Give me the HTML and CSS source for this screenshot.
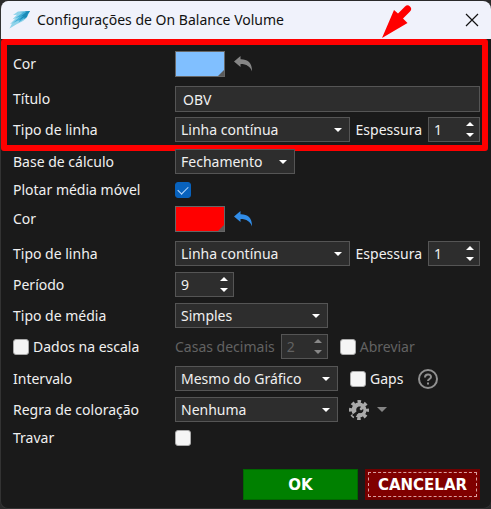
FILE: index.html
```html
<!DOCTYPE html>
<html lang="pt-BR">
<head>
<meta charset="utf-8">
<meta name="viewport" content="width=device-width, initial-scale=1">
<title>Configurações de On Balance Volume</title>
<link rel="stylesheet" href="styles.css">
</head>
<body>
<main class="window">
  <header class="titlebar">
    <svg class="logo" width="22" height="20" viewBox="0 0 22 20" aria-hidden="true">
      <path d="M21 1L9 1.500 4 5l4-.3-4.500 4.500 3-.7L1 14l2-.5L.5 18.500 8 14l6-3 3-2.500 2-3.500z" fill="#8fd3ea"/>
      <path d="M21 1L10 2l4 .5L6.500 8l4-1L4 13l7-3.500-1.500 3 6-4 2.500-4z" fill="#45b0d8"/>
      <path d="M21 1l-5 .5 1 .8-6 4.700 3.500-1.500L9 11l6.500-4-.5 2 3-2 1-3z" fill="#1a8bb8"/>
    </svg>
    <h1 class="title">Configurações de On Balance Volume</h1>
    <button class="close" type="button" aria-label="Fechar">
      <svg width="14" height="14" viewBox="0 0 14 14"><path d="M1 1l12 12M13 1L1 13" stroke="#111" stroke-width="1.200"/></svg>
    </button>
  </header>

  <form class="form">
    <section class="group marked">
      <div class="row color-row">
        <label for="color1">Cor</label>
        <div class="fields">
          <span class="swatch"><input id="color1" type="color" value="#80bfff"></span>
          <button class="undo" type="button" aria-label="Restaurar cor">
            <svg width="20" height="18" viewBox="0 0 20 18"><path d="M0 6.500L6.500 1v3.200C13 4 18.500 7.500 18 16.500 16.500 11.500 12.500 9 6.500 9v3z" fill="currentColor"/></svg>
          </button>
        </div>
      </div>
      <div class="row">
        <label for="titulo">Título</label>
        <div class="fields"><input id="titulo" class="text" type="text" value="OBV"></div>
      </div>
      <div class="row">
        <label for="linha1">Tipo de linha</label>
        <div class="fields">
          <span class="combo grow"><select id="linha1"><option>Linha contínua</option></select></span>
          <label for="esp1">Espessura</label>
          <span class="spin"><input id="esp1" type="number" value="1"></span>
        </div>
      </div>
      <svg class="arrow" width="36" height="36" viewBox="0 0 36 36" aria-hidden="true">
        <path d="M2 34L14 6l4 3.500 7-7q2.500-2.500 5 0t0 5l-7 7 4.500 4.500z" fill="#f00"/>
      </svg>
    </section>

    <section class="group">
      <div class="row">
        <label for="base">Base de cálculo</label>
        <div class="fields"><span class="combo small"><select id="base"><option>Fechamento</option></select></span></div>
      </div>
      <div class="row check-row">
        <label for="plotar">Plotar média móvel</label>
        <div class="fields"><input id="plotar" type="checkbox" checked></div>
      </div>
      <div class="row color-row">
        <label for="color2">Cor</label>
        <div class="fields">
          <span class="swatch"><input id="color2" type="color" value="#ff0000"></span>
          <button class="undo active" type="button" aria-label="Restaurar cor da média">
            <svg width="20" height="18" viewBox="0 0 20 18"><path d="M0 6.500L6.500 1v3.200C13 4 18.500 7.500 18 16.500 16.500 11.500 12.500 9 6.500 9v3z" fill="currentColor"/></svg>
          </button>
        </div>
      </div>
      <div class="row">
        <label for="linha2">Tipo de linha</label>
        <div class="fields">
          <span class="combo grow"><select id="linha2"><option>Linha contínua</option></select></span>
          <label for="esp2">Espessura</label>
          <span class="spin"><input id="esp2" type="number" value="1"></span>
        </div>
      </div>
      <div class="row">
        <label for="periodo">Período</label>
        <div class="fields"><span class="spin wide"><input id="periodo" type="number" value="9"></span></div>
      </div>
      <div class="row">
        <label for="media">Tipo de média</label>
        <div class="fields"><span class="combo medium"><select id="media"><option>Simples</option></select></span></div>
      </div>
      <div class="row">
        <label class="check"><input type="checkbox">Dados na escala</label>
        <div class="fields disabled">
          <label for="casas">Casas decimais</label>
          <span class="spin narrow"><input id="casas" type="number" value="2" disabled></span>
          <label class="check aside"><input type="checkbox" disabled>Abreviar</label>
        </div>
      </div>
    </section>

    <section class="group">
      <div class="row">
        <label for="intervalo">Intervalo</label>
        <div class="fields">
          <span class="combo large"><select id="intervalo"><option>Mesmo do Gráfico</option></select></span>
          <label class="check aside"><input type="checkbox">Gaps</label>
          <button class="help" type="button" aria-label="Ajuda">
            <svg width="20" height="20" viewBox="0 0 20 20" fill="none" stroke="#909090" stroke-width="2">
              <circle cx="10" cy="10" r="9"/>
              <path d="M7 8.500c0-4 6-4 6-.5C13 10 10 10 10 12"/>
              <path d="M10 13.500v2"/>
            </svg>
          </button>
        </div>
      </div>
      <div class="row">
        <label for="regra">Regra de coloração</label>
        <div class="fields">
          <span class="combo large"><select id="regra"><option>Nenhuma</option></select></span>
          <button class="gear" type="button" aria-label="Opções de coloração">
            <svg width="20" height="20" viewBox="0 0 20 20">
              <circle cx="10" cy="10" r="8.200" fill="none" stroke="#aaa" stroke-width="3.600" stroke-dasharray="3.400 3.040" stroke-dashoffset="1.700"/>
              <circle cx="10" cy="10" r="7.500" fill="#aaa"/>
              <path d="M7.500 11.500C6.500 8 9 6 12 6.800L10.500 9l1.500 1.500L14.200 9C15 12 12.500 13.800 10 13l-4 4.500-3-2.500z" fill="#1a1a1a"/>
              <path d="M7.500 15l2.500-2 2 1-2.500 3.500z" fill="#aaa"/>
            </svg>
            <svg width="10" height="6" viewBox="0 0 10 6"><path d="M0 0h10L5 5z" fill="#858585"/></svg>
          </button>
        </div>
      </div>
      <div class="row check-row">
        <label for="travar">Travar</label>
        <div class="fields"><input id="travar" type="checkbox"></div>
      </div>
    </section>

    <footer class="actions">
      <button class="action ok" type="button">OK</button>
      <button class="action cancel" type="button">CANCELAR</button>
    </footer>
  </form>
</main>
</body>
</html>
```
FILE: styles.css
```css
* { box-sizing: border-box; }

body {
  margin: 0;
  background: #2a2a2a;
  color: #f0f0f0;
  font: 14px/20px "Noto Sans", "Liberation Sans", sans-serif;
}

input, select, button { font: inherit; color: inherit; margin: 0; }
button { padding: 0; border: 0; background: none; }
svg { display: block; }

.window {
  margin-top: 1px;
  min-height: calc(100vh - 1px);
  border: solid #333;
  border-width: 0 0 1px 1px;
  border-radius: 8px;
  background: #1a1a1a;
  overflow: hidden;
}

.titlebar {
  display: flex;
  align-items: center;
  height: 38px;
  padding: 0 12px 0 8px;
  background: #f0f2fb;
  color: #111;
}
.logo { margin-right: 6px; }
.title { flex: 1; margin: 0; font-size: 14px; font-weight: 400; white-space: nowrap; }

.form { padding: 12px 11px 8px 12px; }
.group { display: flex; flex-direction: column; gap: 6px; }
.group + .group { margin-top: 7px; }
.row { display: grid; grid-template-columns: 162px 1fr; align-items: center; height: 25px; white-space: nowrap; }
.color-row { height: 26px; margin-bottom: 3px; }
.check-row { height: 20px; }
.fields { display: flex; align-items: center; gap: 6px; min-width: 0; }

.marked { position: relative; }
.marked::after {
  content: "";
  position: absolute;
  inset: -12px -8px -9px -12px;
  border: 6px solid #f00;
  border-radius: 3px;
  pointer-events: none;
}
.arrow { position: absolute; right: 64px; top: -47px; }

.text, .combo, .spin { border: 1px solid #555; background: #2d2d2d; }
.text { width: 100%; height: 26px; padding: 0 7px; }
.text, .combo select, .spin input { outline: 0; border-radius: 0; }

.combo { position: relative; height: 25px; }
.combo select {
  display: block;
  width: 100%;
  height: 100%;
  padding: 0 20px 0 5px;
  border: 0;
  background: none;
  appearance: none;
}
.combo option { background: #2d2d2d; }
.combo::after {
  content: "";
  position: absolute;
  right: 7px;
  top: 10px;
  border: 4px solid transparent;
  border-top-color: #fff;
  border-bottom: 0;
  pointer-events: none;
}
.grow { flex: 1; }
.small { width: 120px; }
.medium { width: 153px; }
.large { width: 163px; }

.spin { position: relative; width: 52px; height: 25px; }
.spin input {
  display: block;
  width: 100%;
  height: 100%;
  padding: 0 18px 0 5px;
  border: 0;
  background: none;
  appearance: textfield;
}
.spin input::-webkit-inner-spin-button { appearance: none; margin: 0; }
.spin::before, .spin::after {
  content: "";
  position: absolute;
  right: 5px;
  border: 4px solid transparent;
  pointer-events: none;
}
.spin::before { top: 4px; border-bottom-color: #fff; border-top: 0; }
.spin::after { bottom: 4px; border-top-color: #fff; border-bottom: 0; }
.wide { width: 59px; }
.narrow { width: 47px; }

.disabled { color: #626262; }
.disabled .spin::before { border-bottom-color: #888; }
.disabled .spin::after { border-top-color: #888; }

input[type="checkbox"] {
  appearance: none;
  display: grid;
  place-content: center;
  width: 16px;
  height: 16px;
  border: 1px solid #aaa;
  border-radius: 3px;
  background: #f5f5f5;
}
input[type="checkbox"]:checked { border-color: #0862bd; background: #0862bd; }
input[type="checkbox"]:checked::after {
  content: "";
  width: 9px;
  height: 5px;
  border: solid #bcdcff;
  border-width: 0 0 1px 1px;
  transform: translateY(-1px) rotate(-45deg);
}
.check { display: flex; align-items: center; gap: 4px; }
.aside { margin-left: 6px; }

.swatch { position: relative; width: 50px; height: 26px; border: 1px solid #666; }
.swatch input { display: block; width: 100%; height: 100%; padding: 0; border: 0; background: none; appearance: none; }
.swatch input::-webkit-color-swatch-wrapper { padding: 0; }
.swatch input::-webkit-color-swatch { border: 0; border-radius: 0; }
.swatch::after {
  content: "";
  position: absolute;
  right: 0;
  bottom: 0;
  border: 3px solid #5a5a5a;
  border-top-color: transparent;
  border-left-color: transparent;
}
.undo { margin-left: 3px; color: #868686; }
.undo.active { color: #318de8; }
.help { margin-left: 9px; }
.gear { display: flex; align-items: center; gap: 8px; margin-left: 5px; }

.actions { display: flex; justify-content: flex-end; gap: 7px; margin-top: 21px; }
.action {
  width: 115px;
  height: 31px;
  color: #fff;
  font: bold 15px/20px "DejaVu Sans", sans-serif;
}
.ok { border: 1px solid #006800; background: #008000; }
.cancel { border: 2px solid #700000; background: #800000; outline: 1px dashed #d9a0a0; outline-offset: -4px; }
```
